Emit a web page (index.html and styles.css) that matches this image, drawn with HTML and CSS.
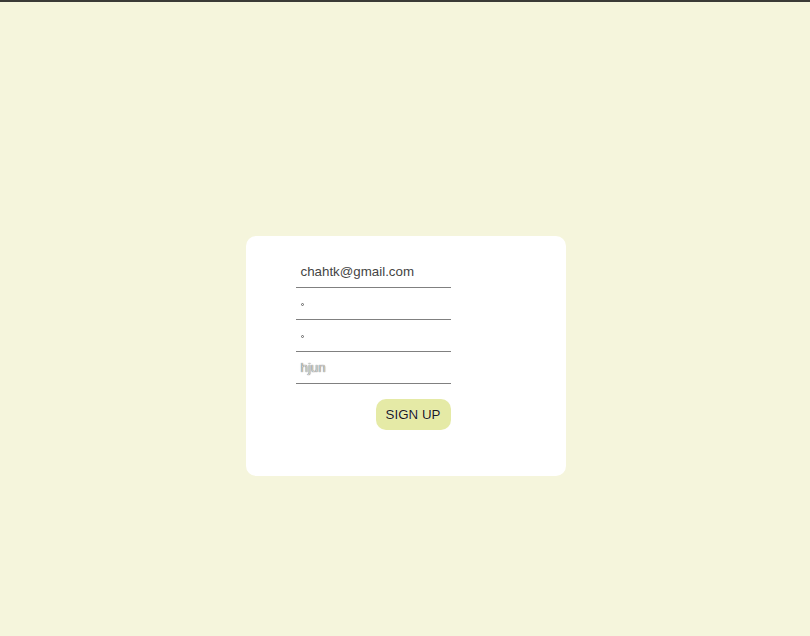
FILE: index.html
```html
<!DOCTYPE html>
<html>
<head>
<meta charset="utf-8">
<link rel="stylesheet" href="styles.css">
</head>
<body>
<div class="topbar"></div>
<main class="page">
  <div class="card">
    <form class="form">
      <div class="field"><span class="val">chahtk@gmail.com</span></div>
      <div class="field"><span class="dot"></span></div>
      <div class="field"><span class="dot"></span></div>
      <div class="field"><span class="val light">hjun</span></div>
      <div class="actions"><button type="button" class="btn">SIGN UP</button></div>
    </form>
  </div>
</main>
</body>
</html>
```
FILE: styles.css
```css
html, body { margin: 0; padding: 0; }
body {
  background: #f5f5dc;
  font-family: "Liberation Sans", Arial, sans-serif;
  height: 636px;
  overflow: hidden;
}
.topbar { height: 2px; background: #3a3a36; }
.page {
  display: flex;
  justify-content: center;
  padding-top: 234px;
  padding-left: 1px;
}
.card {
  width: 320px;
  height: 240px;
  box-sizing: border-box;
  background: #fff;
  border-radius: 10px;
  padding: 20px 50px 0 50px;
}
.form { width: 155px; display: flex; flex-direction: column; }
.field {
  height: 31px;
  border-bottom: 1px solid #808080;
  display: flex;
  align-items: center;
  padding-left: 5px;
  font-size: 13.333px;
  color: #444;
}
.val { line-height: 16px; }
.light { color: #d4d4d4; text-shadow: 0 0 1px #2a2a2a; }
.dot {
  width: 3px; height: 3px;
  border: 1px solid #666;
  border-radius: 50%;
  box-sizing: border-box;
  margin-top: 1px;
}
.actions { display: flex; justify-content: flex-end; margin-top: 15px; }
.btn {
  width: 75px;
  height: 31px;
  border: none;
  border-radius: 10px;
  background: #e5eaa6;
  font-family: "Liberation Sans", Arial, sans-serif;
  font-size: 13.333px;
  color: #1a1a1a;
  text-shadow: 0 0 1px #fff;
  padding: 0;
}
```
